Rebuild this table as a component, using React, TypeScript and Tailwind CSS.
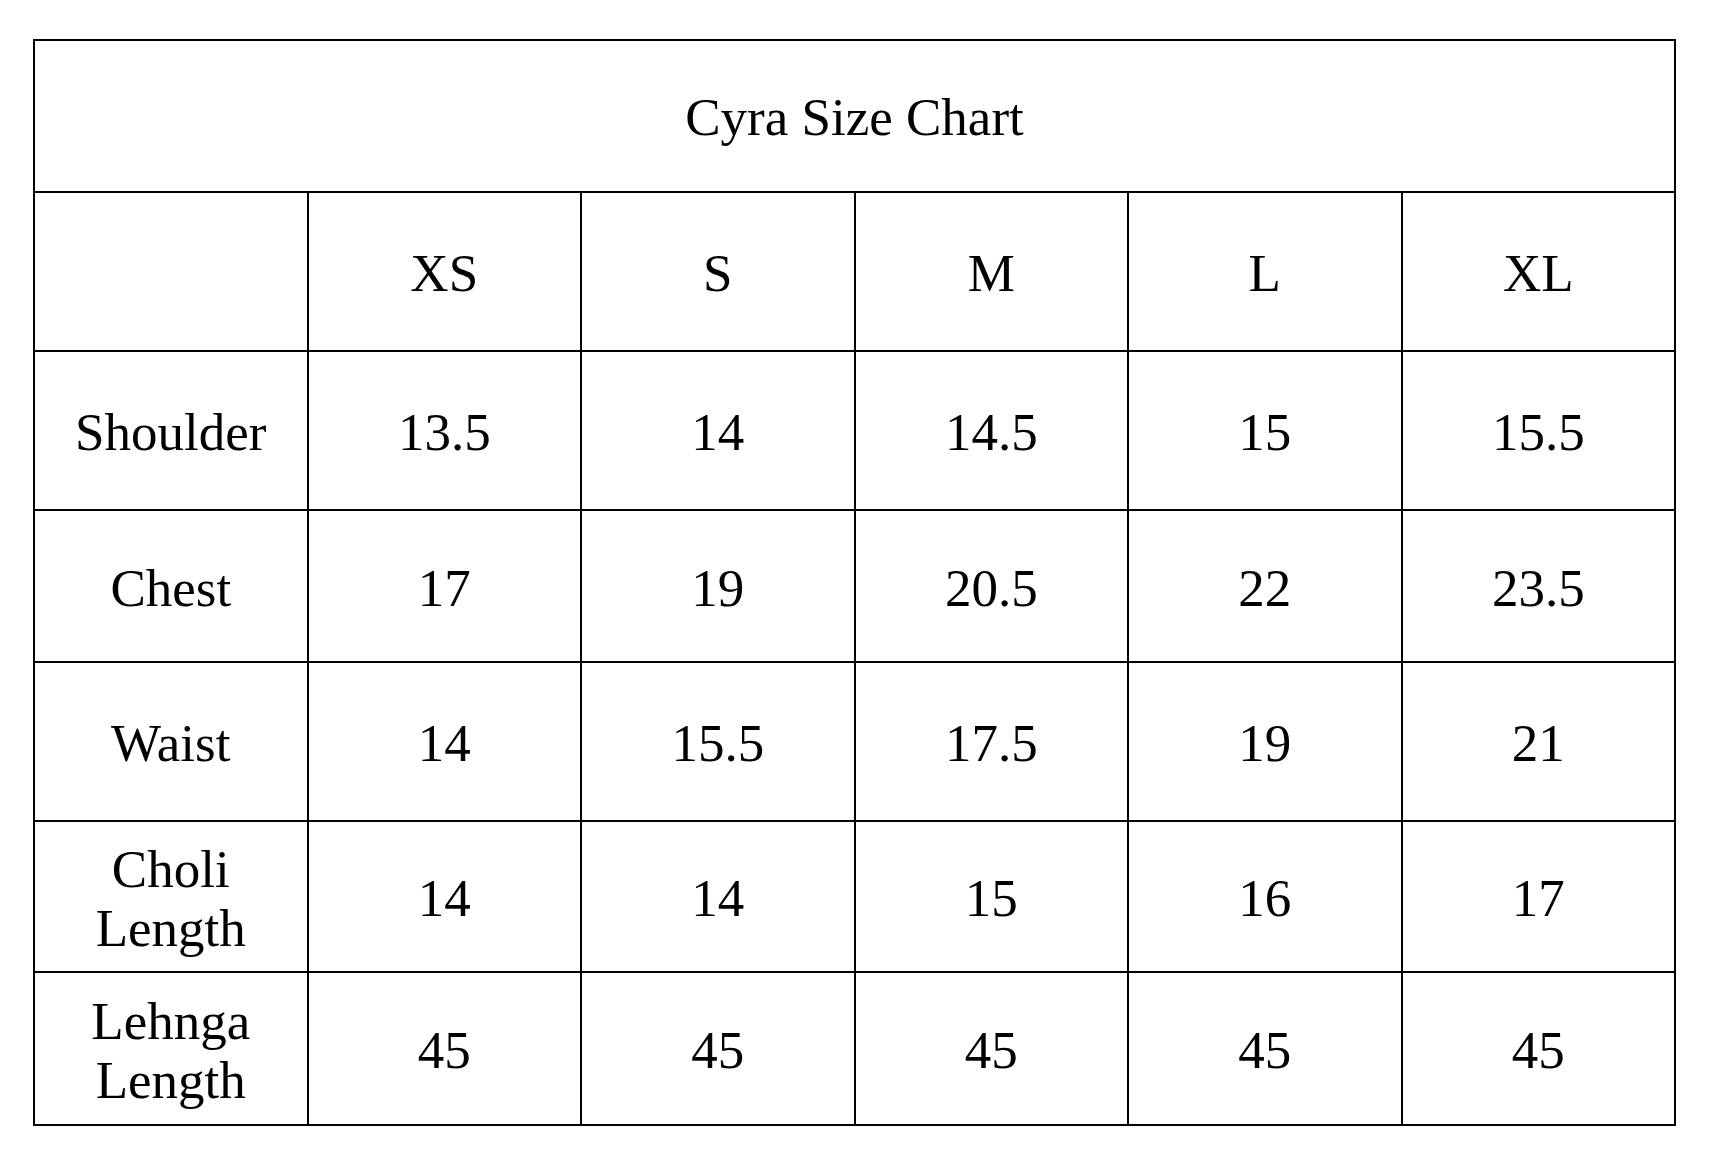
import React from "react";

const sizes = ["XS", "S", "M", "L", "XL"];
const rows: { label: string[]; values: string[]; h: string }[] = [
  { label: ["Shoulder"], values: ["13.5", "14", "14.5", "15", "15.5"], h: "h-[159px]" },
  { label: ["Chest"], values: ["17", "19", "20.5", "22", "23.5"], h: "h-[152px]" },
  { label: ["Waist"], values: ["14", "15.5", "17.5", "19", "21"], h: "h-[159px]" },
  { label: ["Choli", "Length"], values: ["14", "14", "15", "16", "17"], h: "h-[151px]" },
  { label: ["Lehnga", "Length"], values: ["45", "45", "45", "45", "45"], h: "h-[153px]" },
];

function Cell({ children, h }: { children?: React.ReactNode; h: string }) {
  return (
    <div
      className={`${h} flex flex-col items-center justify-center border-r-2 border-b-2 border-black pt-[4px] text-center leading-[59px]`}
    >
      {children}
    </div>
  );
}

export default function App() {
  return (
    <div
      className="min-h-[1164px] w-full bg-white pl-[33px] pt-[39px] text-black"
      style={{ fontFamily: '"Liberation Serif", "Times New Roman", serif' }}
    >
      <div className="w-[1643px] border-l-2 border-t-2 border-black text-[53px]">
        <div className="flex h-[152px] items-center justify-center border-r-2 border-b-2 border-black pt-[3px]">
          Cyra Size Chart
        </div>
        <div className="grid grid-cols-6">
          <Cell h="h-[159px]" />
          {sizes.map((s) => (
            <Cell key={s} h="h-[159px]">
              {s}
            </Cell>
          ))}
          {rows.map((r) => (
            <React.Fragment key={r.label.join(" ")}>
              <Cell h={r.h}>
                {r.label.map((l) => (
                  <span key={l}>{l}</span>
                ))}
              </Cell>
              {r.values.map((v, i) => (
                <Cell key={i} h={r.h}>
                  {v}
                </Cell>
              ))}
            </React.Fragment>
          ))}
        </div>
      </div>
    </div>
  );
}
